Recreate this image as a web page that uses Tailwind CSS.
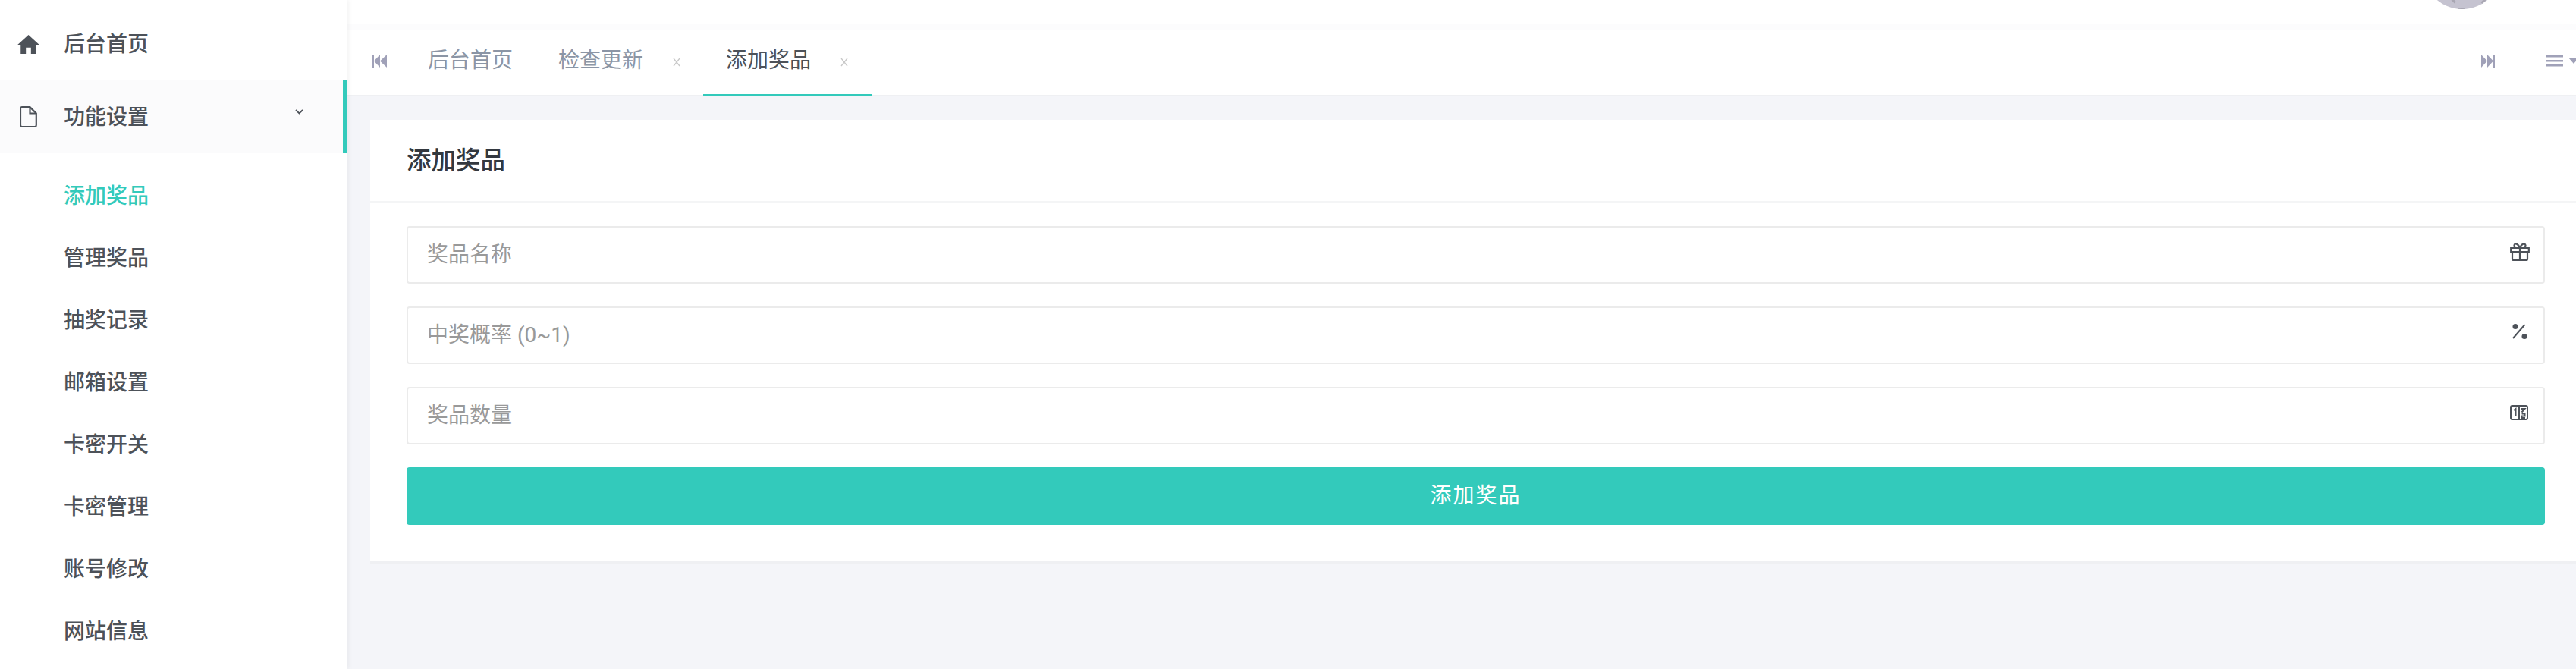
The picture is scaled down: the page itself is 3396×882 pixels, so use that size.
<!DOCTYPE html>
<html lang="zh-CN">
<head>
    <meta charset="UTF-8">
    <meta name="viewport" content="width=device-width, initial-scale=1.0">
    <title>添加奖品</title>
    <script src="https://cdn.jsdelivr.net/npm/@tailwindcss/browser@4"></script>
</head>
<body class="bg-[#f4f5f9] h-[882px] overflow-hidden flex font-['Roboto','Noto_Sans_CJK_SC',sans-serif] text-[#4d5259]">

    <!-- Sidebar -->
    <aside class="w-[458px] h-full shrink-0 bg-white shadow-[2px_0_6px_rgba(0,0,0,0.05)] pt-[14px] relative z-10">
        <a class="h-[92px] flex items-center pl-[23px] pb-[2px] text-[28px] font-medium">
            <svg class="w-[29px] h-[25px] mr-[32px] mb-[1px]" viewBox="0 0 24 21" fill="#4d5259"><path d="M12 0 0 11h3.400v10h5.800v-7h5.600v7h5.800V11H24z"/></svg>
            <span>后台首页</span>
        </a>
        <a class="h-[96px] flex items-center pl-[26px] pt-[2px] bg-[#fbfbfc] border-r-[6px] border-[#33cabb] text-[28px] font-medium relative">
            <svg class="w-[23px] h-[28px] mr-[35px] mb-[2px]" viewBox="0 0 23 28" fill="none" stroke="#4d5259" stroke-width="2.200"><path d="M3 1.200h10.500l8.300 8.300V25a2 2 0 0 1-2 2H3a2 2 0 0 1-2-2V3.200a2 2 0 0 1 2-2z"/><path d="M13.500 1.200v8.300h8.300"/></svg>
            <span>功能设置</span>
            <svg class="w-[11px] h-[7px] absolute left-[389px] top-[38px]" viewBox="0 0 11 7" fill="none" stroke="#4d5259" stroke-width="1.800"><path d="m1 1 4.500 4.500L10 1"/></svg>
        </a>
        <nav class="pt-[16px] flex flex-col text-[28px] font-medium pl-[84px]">
            <a class="h-[82px] flex items-center text-[#33cabb]">添加奖品</a>
            <a class="h-[82px] flex items-center">管理奖品</a>
            <a class="h-[82px] flex items-center">抽奖记录</a>
            <a class="h-[82px] flex items-center">邮箱设置</a>
            <a class="h-[82px] flex items-center">卡密开关</a>
            <a class="h-[82px] flex items-center">卡密管理</a>
            <a class="h-[82px] flex items-center">账号修改</a>
            <a class="h-[82px] flex items-center">网站信息</a>
        </nav>
    </aside>

    <!-- Main -->
    <main class="flex-1 min-w-0 flex flex-col">
        <!-- Top bar, avatar cut off by the window -->
        <header class="h-[32px] bg-white relative overflow-hidden">
            <div class="absolute left-[2736px] top-[-92px] w-[104px] h-[104px] rounded-full bg-[#c5c3d0] overflow-hidden">
                <div class="absolute left-[36px] top-[91px] w-[8px] h-[3px] rotate-45 bg-[#a9a7b3]"></div>
                <div class="absolute left-[76px] top-[91px] w-[10px] h-[3px] -rotate-45 bg-[#a9a7b3]"></div>
                <div class="absolute left-[46px] top-[102px] w-[10px] h-[2px] bg-[#a9a7b3]"></div>
            </div>
        </header>
        <div class="h-[8px] bg-[#fcfcfd]"></div>

        <!-- Tabs -->
        <div class="h-[87px] bg-white border-b-2 border-[#eff0f3] flex items-stretch text-[28px] relative">
            <div class="w-[106px] flex items-center pl-[32px] pb-[5px]">
                <svg class="w-[20px] h-[17px]" viewBox="0 0 20 17" fill="#a0a1b8"><path d="M0 0h3v17H0zM11 0v17L3 8.500zM20 0v17l-9-8.500z"/></svg>
            </div>
            <div class="w-[172px] flex items-center text-[#8b95a5] pb-[5px]">后台首页</div>
            <div class="w-[191px] flex items-center text-[#8b95a5] pb-[5px]">
                <span>检查更新</span>
                <svg class="w-[10px] h-[12px] ml-[39px] mt-[4px]" viewBox="0 0 10 12" fill="none" stroke="#c8c8c8" stroke-width="1.300"><path d="m1 1 8 10M9 1 1 11"/></svg>
            </div>
            <div class="w-[222px] -mb-[2px] border-b-[3px] border-[#33cabb] flex items-center pl-[30px] pb-[4px]">
                <span>添加奖品</span>
                <svg class="w-[10px] h-[12px] ml-[39px] mt-[4px]" viewBox="0 0 10 12" fill="none" stroke="#c8c8c8" stroke-width="1.300"><path d="m1 1 8 10M9 1 1 11"/></svg>
            </div>
            <div class="flex-1 flex items-center justify-end gap-[68px] pb-[5px]">
                <svg class="w-[18px] h-[17px]" viewBox="0 0 18 17" fill="#a0a1b8"><path d="M0 0v17l8-8.500zM8 0v17l8-8.500zM16 0h2v17h-2z"/></svg>
                <div class="flex items-center gap-[7px] w-[39px] overflow-hidden shrink-0">
                    <svg class="w-[22px] h-[15px] shrink-0" viewBox="0 0 22 15" fill="#a0a1b8"><path d="M0 0h22v2.500H0zM0 6h22v2.500H0zM0 12h22v2.500H0z"/></svg>
                    <svg class="w-[14px] h-[8px] shrink-0" viewBox="0 0 14 8" fill="#a0a1b8"><path d="M0 0h14L7 8z"/></svg>
                </div>
            </div>
        </div>

        <!-- Card -->
        <section class="mt-[31px] ml-[30px] h-[582px] bg-white shadow-[0_3px_0_#eff0f3]">
            <h4 class="h-[109px] border-b-2 border-[#f4f5f6] flex items-center pl-[48px] pt-[2px] text-[32.5px] font-medium text-[#33383f]">添加奖品</h4>
            <form class="pt-[31px] pl-[48px] pr-[41px] flex flex-col">
                <div class="h-[76px] mb-[30px] border-2 border-[#ebebeb] rounded-[4px] flex items-center justify-between pl-[25px] pr-[18px] text-[28px] text-[#999]">
                    <span>奖品名称</span>
                    <svg class="w-[26px] h-[24px] mb-[9px]" viewBox="0 0 26 24" fill="none" stroke="#4d5259" stroke-width="2.200"><path d="M1.200 7h23.600v5H1.200zM3 12v9.500a1.500 1.500 0 0 0 1.500 1.500h17a1.500 1.500 0 0 0 1.500-1.500V12M13 7v16M13 7c-2-6-7-7-7.500-3.500C5.200 6 9 7 13 7c4 0 7.800-1 7.500-3.500C20 0 15 1 13 7z"/></svg>
                </div>
                <div class="h-[76px] mb-[30px] border-2 border-[#ebebeb] rounded-[4px] flex items-center justify-between pl-[25px] pr-[21px] text-[28px] text-[#999]">
                    <span>中奖概率 (0~1)</span>
                    <svg class="w-[20px] h-[20px] mb-[10px]" viewBox="0 0 20 20" fill="#4d5259"><circle cx="4" cy="3.500" r="3.500"/><circle cx="16" cy="16.500" r="3.500"/><path d="M1 19 16.500 1" stroke="#4d5259" stroke-width="2" fill="none"/></svg>
                </div>
                <div class="h-[76px] mb-[30px] border-2 border-[#ebebeb] rounded-[4px] flex items-center justify-between pl-[25px] pr-[20px] text-[28px] text-[#999]">
                    <span>奖品数量</span>
                    <svg class="w-[24px] h-[20px] mb-[9px]" viewBox="0 0 24 20" fill="none" stroke="#4d5259" stroke-width="2"><rect x="1" y="1" width="22" height="18" rx="2"/><path d="M12 1v18M5 7l2.500-2v10M15 5h4.500l-4 4.500M15.500 11.500H19.500v3h-4v2.500H20"/></svg>
                </div>
                <button type="button" class="h-[76px] bg-[#33cabb] rounded-[4px] text-white text-[28px] tracking-[2px]">添加奖品</button>
            </form>
        </section>
    </main>
</body>
</html>
